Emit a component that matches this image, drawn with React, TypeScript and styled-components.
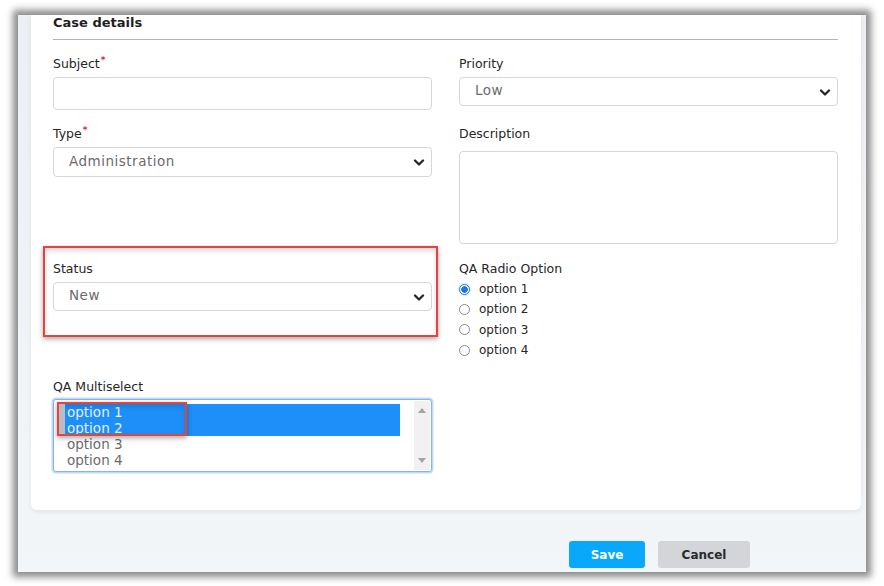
import React from "react";
import styled, { createGlobalStyle } from "styled-components";

const GlobalStyle = createGlobalStyle`
  html, body {
    margin: 0;
    padding: 0;
    background: #ffffff;
    width: 884px;
    height: 586px;
    overflow: hidden;
    font-family: "DejaVu Sans", "Liberation Sans", sans-serif;
  }
  * { box-sizing: border-box; }
`;

const Frame = styled.div`
  margin: 15px 0 0 18px;
  width: 848px;
  height: 557px;
  background: linear-gradient(#eceff3, #f3f6f9);
  box-shadow: 0 0 7px 5px rgba(60, 60, 60, 0.6);
  display: flex;
  flex-direction: column;
  overflow: hidden;
`;

const Card = styled.div`
  margin-left: 13px;
  width: 830px;
  background: #ffffff;
  border-radius: 0 0 6px 6px;
  box-shadow: 0 2px 5px rgba(0, 0, 0, 0.07);
  padding: 0 23px 38px 22px;
`;

const Title = styled.h2`
  margin: 0;
  font-size: 13px;
  line-height: 16px;
  font-weight: 700;
  color: #1f1f1f;
`;

const Divider = styled.div`
  margin-top: 8px;
  height: 1px;
  background: #b4b4b4;
`;

const Grid = styled.div`
  margin-top: 17px;
  display: grid;
  grid-template-columns: 379px 379px;
  grid-template-rows: 70px 135px 118px auto;
  column-gap: 27px;
`;

const Field = styled.div`
  position: relative;
  display: flex;
  flex-direction: column;
`;

const Label = styled.label<{ $required?: boolean }>`
  font-size: 12.5px;
  line-height: 14px;
  color: #262626;
  &::after {
    content: ${(p) => (p.$required ? '"*"' : '""')};
    color: #e0262b;
    font-size: 9px;
    font-weight: 700;
    position: relative;
    top: -5px;
    left: 1px;
  }
`;

const TextInput = styled.input`
  margin-top: 5px;
  height: 33px;
  border: 1px solid #d4d7dc;
  border-radius: 4px;
  outline: none;
  background: #fff;
`;

const SelectWrap = styled.div`
  position: relative;
  margin-top: 5px;
`;

const Select = styled.select<{ $h: number }>`
  appearance: none;
  width: 100%;
  height: ${(p) => p.$h}px;
  border: 1px solid #d4d7dc;
  border-radius: 4px;
  background: #fff;
  padding: 0 30px 3px 15px;
  font-family: "DejaVu Sans", sans-serif;
  font-size: 13.5px;
  letter-spacing: 0.5px;
  color: #6b6b6b;
  outline: none;
`;

const Chevron = styled.svg`
  position: absolute;
  right: 7px;
  top: 50%;
  margin-top: -3px;
  pointer-events: none;
`;

const TextArea = styled.textarea`
  margin-top: 9px;
  height: 93px;
  border: 1px solid #d4d7dc;
  border-radius: 4px;
  resize: none;
  outline: none;
`;

const RadioList = styled.div`
  margin-top: 2px;
  display: flex;
  flex-direction: column;
`;

const RadioRow = styled.label`
  display: flex;
  align-items: center;
  height: 20.3px;
  gap: 9px;
  font-size: 12px;
  color: #262626;
`;

const Radio = styled.input`
  appearance: none;
  margin: 0;
  width: 11px;
  height: 11px;
  border-radius: 50%;
  border: 1px solid #8a8a8a;
  background: #fff;
  &:checked {
    border-color: #1b74e8;
    background: radial-gradient(circle, #1b74e8 0 3px, #fff 3.5px);
    box-shadow: 0 0 2px rgba(27, 116, 232, 0.5);
  }
`;

const ListBox = styled.div`
  margin-top: 4px;
  height: 73px;
  border: 1px solid #86b4f2;
  border-radius: 3px;
  box-shadow: 0 0 0 1.5px rgba(120, 170, 240, 0.45);
  display: flex;
  padding: 4px 1px 2px 9px;
  background: #fff;
`;

const Options = styled.div`
  flex: 1;
  margin-right: 14px;
`;

const OptionRow = styled.div<{ $selected?: boolean }>`
  height: 16px;
  line-height: 16px;
  font-size: 13.5px;
  padding-left: 4px;
  color: ${(p) => (p.$selected ? "#e6eefc" : "#6b6b6b")};
  background: ${(p) => (p.$selected ? "#1e8ff8" : "transparent")};
`;

const Scrollbar = styled.div`
  width: 16px;
  margin: -3px 0 -1px;
  background: #f1f1f1;
  display: flex;
  flex-direction: column;
  justify-content: space-between;
  align-items: center;
  padding: 7px 0 7px;
`;

const Highlight = styled.div<{ $l: number; $t: number; $w: number; $h: number }>`
  position: absolute;
  left: ${(p) => p.$l}px;
  top: ${(p) => p.$t}px;
  width: ${(p) => p.$w}px;
  height: ${(p) => p.$h}px;
  border: 2px solid #e8413e;
  box-shadow: 0 2px 5px rgba(0, 0, 0, 0.35), inset 0 3px 5px rgba(0, 0, 0, 0.14);
  pointer-events: none;
`;

const GrayNub = styled.div`
  position: absolute;
  left: 0;
  top: 0;
  width: 6px;
  bottom: 0;
  background: #b9bcc1;
`;

const Footer = styled.div`
  margin-top: 31px;
  display: flex;
  justify-content: flex-end;
  gap: 13px;
  padding-right: 116px;
`;

const Button = styled.button<{ $primary?: boolean }>`
  height: 27px;
  width: ${(p) => (p.$primary ? 76 : 92)}px;
  border: none;
  border-radius: 3px;
  font-family: "DejaVu Sans", sans-serif;
  font-weight: 700;
  font-size: 12px;
  color: ${(p) => (p.$primary ? "#ffffff" : "#2a2a2a")};
  background: ${(p) => (p.$primary ? "#0aa8fb" : "#d4d5d8")};
`;

const ChevronIcon = () => (
  <Chevron width="12" height="7" viewBox="0 0 12 7">
    <path d="M2 1.5 L6 5.5 L10 1.5" fill="none" stroke="#262626" strokeWidth="2.3" strokeLinecap="round" strokeLinejoin="round" />
  </Chevron>
);

const SelectField = ({ value, h = 29 }: { value: string; h?: number }) => (
  <SelectWrap>
    <Select $h={h} defaultValue={value}>
      <option>{value}</option>
    </Select>
    <ChevronIcon />
  </SelectWrap>
);

const options = ["option 1", "option 2", "option 3", "option 4"];

export default function App() {
  return (
    <>
      <GlobalStyle />
      <Frame>
        <Card>
          <Title>Case details</Title>
          <Divider />
          <Grid>
            <Field>
              <Label $required>Subject</Label>
              <TextInput />
            </Field>
            <Field>
              <Label>Priority</Label>
              <SelectField value="Low" />
            </Field>
            <Field>
              <Label $required>Type</Label>
              <SelectField value="Administration" h={30} />
            </Field>
            <Field>
              <Label>Description</Label>
              <TextArea />
            </Field>
            <Field>
              <Label>Status</Label>
              <SelectField value="New" />
              <Highlight $l={-10} $t={-16} $w={395} $h={91} />
            </Field>
            <Field>
              <Label>QA Radio Option</Label>
              <RadioList>
                {options.map((o, i) => (
                  <RadioRow key={o}>
                    <Radio type="radio" name="qa" defaultChecked={i === 0} />
                    {o}
                  </RadioRow>
                ))}
              </RadioList>
            </Field>
            <Field>
              <Label>QA Multiselect</Label>
              <ListBox>
                <Options>
                  {options.map((o, i) => (
                    <OptionRow key={o} $selected={i < 2}>
                      {o}
                    </OptionRow>
                  ))}
                </Options>
                <Scrollbar>
                  <svg width="8" height="5" viewBox="0 0 8 5">
                    <path d="M0 5 L4 0 L8 5 Z" fill="#a3a3a3" />
                  </svg>
                  <svg width="8" height="5" viewBox="0 0 8 5">
                    <path d="M0 0 L4 5 L8 0 Z" fill="#a3a3a3" />
                  </svg>
                </Scrollbar>
              </ListBox>
              <Highlight $l={4} $t={22} $w={130} $h={34}>
                <GrayNub />
              </Highlight>
            </Field>
          </Grid>
        </Card>
        <Footer>
          <Button $primary>Save</Button>
          <Button>Cancel</Button>
        </Footer>
      </Frame>
    </>
  );
}
